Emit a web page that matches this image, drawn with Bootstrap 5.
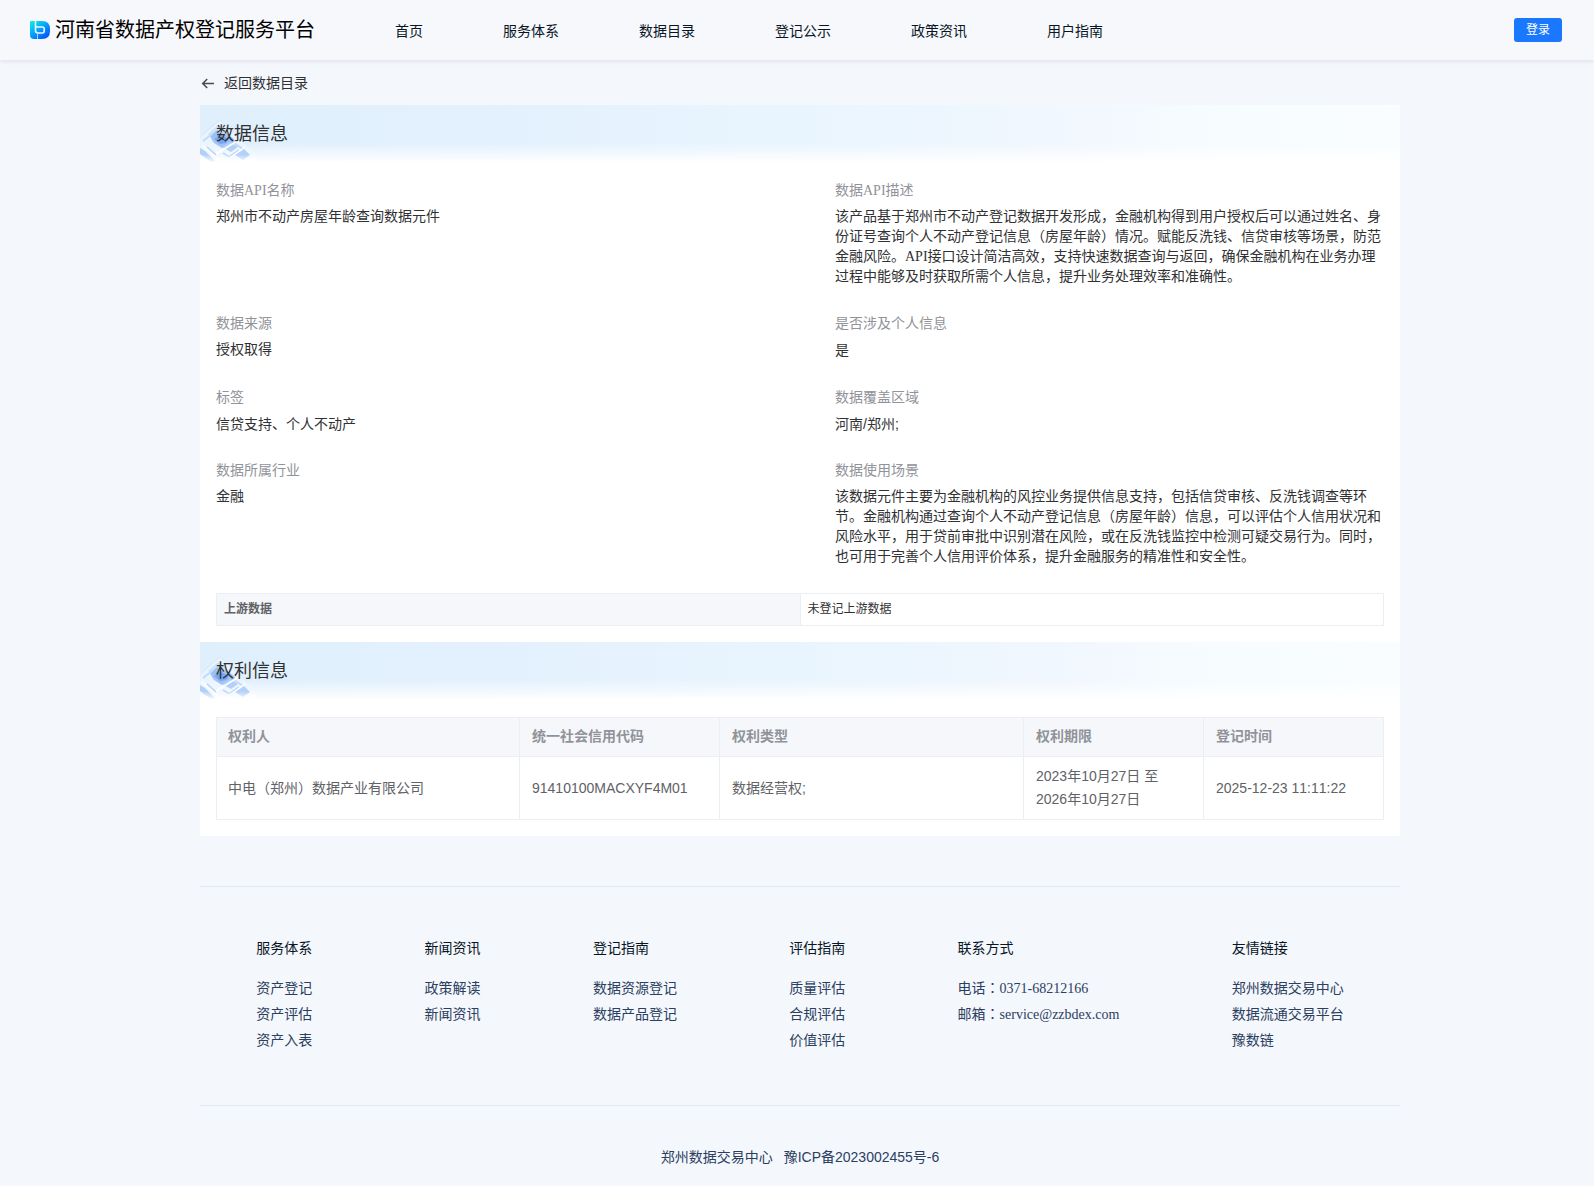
<!DOCTYPE html>
<html lang="zh-CN">
<head>
<meta charset="utf-8">
<title>河南省数据产权登记服务平台</title>
<link href="https://cdn.jsdelivr.net/npm/bootstrap@5.3.0/dist/css/bootstrap.min.css" rel="stylesheet">
<style>
body{font-family:"Liberation Sans","Noto Sans CJK SC",sans-serif;font-size:14px;line-height:20px;background:#f4f7fc;color:#303133}
a{text-decoration:none;color:inherit}
.ff-serif{font-family:"Liberation Serif","Noto Sans CJK SC",serif}
.ff-jp{font-family:"Noto Sans CJK JP",sans-serif;line-height:1}
.topbar{height:60px;background:#f7f8fc;box-shadow:0 2px 4px rgba(0,21,41,.08);padding:0 32px 0 30px}
.brand-name{font-size:20px;line-height:30px;color:#000;margin-left:5px}
.topnav{gap:80px;margin-left:80px;padding-top:2px;color:#071525}
.login{width:48px;height:24px;font-size:12px;line-height:24px;background:#1a78ff;color:#fff;border-radius:3px}
.page{width:1200px;margin-left:200px}
.back{height:45px}
.banner{height:58px;padding:0 16px;font-size:18px;line-height:58px;background:linear-gradient(180deg,rgba(255,255,255,0) 0,rgba(255,255,255,0) 66%,#fff 100%),linear-gradient(90deg,#e0effc 0,#e3f1fe 25%,#e9f5fe 50%,#f1f7fe 72%,#f7fcff 85%,#f9fdff 100%)}
.banner svg{position:absolute;left:0;top:0}
.banner span{position:relative}
.lab{color:#909399;line-height:20px;margin-bottom:6px}
.fields{padding:18px 16px 0}
.fields .c1{width:619px}
.fields .c2{width:549px}
.r1{height:132px}.r2{height:74px}.r3{height:73px}.r4{height:133px}
.lower{padding-top:1px}
.up{margin:0 16px;border:1px solid #ebeef5;height:33px;font-size:12px;line-height:30px}
.up>div{width:583px;padding-left:7px}
.up>div:first-child{width:584px;background:#f5f7fb;color:#606266;font-weight:700;border-right:1px solid #ebeef5}
.rights{margin:17px 16px 0;width:1168px;table-layout:fixed;border-collapse:separate;border-spacing:0;border:solid #ebeef5;border-width:1px 0 0 1px;color:#606266;line-height:23px;font-kerning:none}
.rights th,.rights td{border:solid #ebeef5;border-width:0 1px 1px 0;padding:0 12px 0 11px}
.rights th{height:39px;background:#f5f7fa;color:#909399;padding-bottom:1px}
.rights td{height:63px}
.rights th+th,.rights td+td{padding-left:12px}
.foot{margin-top:50px;border-top:1px solid #dfe7f1;border-bottom:1px solid #dfe7f1;height:220px;padding-top:52px}
.foot h6{font-size:14px;line-height:20px;font-weight:400;color:#071525;margin:0 0 20px}
.foot p{margin:0 0 6px;height:20px;color:#2b405f}
.copy{margin-top:41px;color:#2b405f;gap:11px}
</style>
</head>
<body>
<svg width="0" height="0" class="position-absolute"><defs>
  <filter id="soft" x="-20%" y="-20%" width="140%" height="140%"><feGaussianBlur stdDeviation=".6"/></filter>
  <linearGradient id="fade" x1="0" y1="0" x2="0" y2="1"><stop offset=".85" stop-color="#fff" stop-opacity="0"/><stop offset="1" stop-color="#fff"/></linearGradient>
  <symbol id="cubes" viewBox="0 0 56 58">
    <g filter="url(#soft)">
      <path d="M0 34L20 15L52 46L40 58H16L0 46z" fill="#f0f7ff" opacity=".65"/>
      <path d="M8 29l10-9 9 6-9 9z" fill="#c5ddf9" opacity=".8"/>
      <path d="M10 31l7-6 4 4 5-1 8 6 2 4-7 1-7 4-8-5-2-3z" fill="#8bb6f5" opacity=".8"/>
      <path d="M14 34l7-4 8 4-3 4-6 1z" fill="#5d93f0" opacity=".6"/>
      <path d="M22 42l8-5 8 5-7 5z" fill="#b3d1f8"/>
      <path d="M0 43l5 3 10 10-4 1L0 49z" fill="#b0d0f7"/>
      <path d="M35 50l9-6 6 6-7 5z" fill="#b3d1f9"/>
      <path d="M29 52l10-7M3 36l9-7M7 42l9 8M23 48l8 5M34 38l9 6" stroke="#c0daf8" stroke-width="1.800"/>
      <path d="M2 40l17 15M16 49l21-13M27 55l18-13" stroke="#fff" stroke-width="1.500"/>
    </g>
    <path d="M3 29L20 15L36 29M8 33L20 22" fill="none" stroke="#c9e0f8" stroke-width=".6"/>
    <path d="M0 0h56v58H0z" fill="url(#fade)"/>
  </symbol>
</defs></svg>
<header class="topbar d-flex align-items-center">
  <svg width="20" height="20" viewBox="0 0 20 20"><defs><linearGradient id="lg" x1="0" y1="0" x2=".8" y2="1"><stop offset="0" stop-color="#06f5df"/><stop offset=".45" stop-color="#09aaf8"/><stop offset="1" stop-color="#0550ff"/></linearGradient></defs>
  <path d="M1 1H12Q20 1 20 9V11Q20 19 12 19H4Q0 19 0 15V2Q0 1 1 1z" fill="url(#lg)"/>
  <path d="M5.500 1V10.500Q5.500 13 8 13H12.300Q14.200 13 14.200 11V9Q14.200 7 12.300 7H6" fill="none" stroke="#e9fbff" stroke-width="1.600"/><path d="M7.500 13.500V19" stroke="#9ed8ff" stroke-width="1"/></svg>
  <span class="brand-name">河南省数据产权登记服务平台</span>
  <nav class="topnav d-flex"><a href="#">首页</a><a href="#">服务体系</a><a href="#">数据目录</a><a href="#">登记公示</a><a href="#">政策资讯</a><a href="#">用户指南</a></nav>
  <a class="login text-center ms-auto" href="#">登录</a>
</header>
<main class="page">
  <div class="back d-flex align-items-center"><svg width="24" height="16" viewBox="0 0 24 16" fill="none" stroke="#484b50" stroke-width="1.500"><path d="M14 8.500H2.800M7.200 4L2.700 8.500L7.200 13"/></svg><span>返回数据目录</span></div>
  <section class="bg-white pb-3">
    <div class="banner position-relative"><svg width="56" height="58"><use href="#cubes"/></svg><span>数据信息</span></div>
    <div class="fields">
      <div class="d-flex r1 ff-serif"><div class="c1"><div class="lab">数据API名称</div><div>郑州市不动产房屋年龄查询数据元件</div></div><div class="c2"><div class="lab">数据API描述</div><div>该产品基于郑州市不动产登记数据开发形成，金融机构得到用户授权后可以通过姓名、身份证号查询个人不动产登记信息（房屋年龄）情况。赋能反洗钱、信贷审核等场景，防范金融风险。API接口设计简洁高效，支持快速数据查询与返回，确保金融机构在业务办理过程中能够及时获取所需个人信息，提升业务处理效率和准确性。</div></div></div>
      <div class="d-flex r2"><div class="c1"><div class="lab">数据来源</div><div>授权取得</div></div><div class="c2"><div class="lab">是否涉及个人信息</div><div class="lower">是</div></div></div>
      <div class="d-flex r3"><div class="c1"><div class="lab">标签</div><div class="lower">信贷支持、个人不动产</div></div><div class="c2"><div class="lab">数据覆盖区域</div><div class="lower">河南/郑州;</div></div></div>
      <div class="d-flex r4"><div class="c1"><div class="lab">数据所属行业</div><div>金融</div></div><div class="c2"><div class="lab">数据使用场景</div><div>该数据元件主要为金融机构的风控业务提供信息支持，包括信贷审核、反洗钱调查等环节。金融机构通过查询个人不动产登记信息（房屋年龄）信息，可以评估个人信用状况和风险水平，用于贷前审批中识别潜在风险，或在反洗钱监控中检测可疑交易行为。同时，也可用于完善个人信用评价体系，提升金融服务的精准性和安全性。</div></div></div>
    </div>
    <div class="up d-flex"><div>上游数据</div><div>未登记上游数据</div></div>
    <div class="banner position-relative mt-3"><svg width="56" height="58"><use href="#cubes"/></svg><span>权利信息</span></div>
    <table class="rights"><colgroup><col style="width:303px"><col style="width:200px"><col style="width:304px"><col style="width:180px"><col style="width:180px"></colgroup>
      <tr><th>权利人</th><th>统一社会信用代码</th><th>权利类型</th><th>权利期限</th><th>登记时间</th></tr>
      <tr><td>中电（郑州）数据产业有限公司</td><td>91410100MACXYF4M01</td><td>数据经营权;</td><td>2023年10月27日 至 2026年10月27日</td><td>2025-12-23 11:11:22</td></tr>
    </table>
  </section>
  <footer>
    <div class="foot d-flex justify-content-around ff-serif">
      <div><h6>服务体系</h6><p>资产登记</p><p>资产评估</p><p>资产入表</p></div>
      <div><h6>新闻资讯</h6><p>政策解读</p><p>新闻资讯</p></div>
      <div><h6>登记指南</h6><p>数据资源登记</p><p>数据产品登记</p></div>
      <div><h6>评估指南</h6><p>质量评估</p><p>合规评估</p><p>价值评估</p></div>
      <div><h6>联系方式</h6><p>电话<span class="ff-jp" lang="ja">：</span>0371-68212166</p><p>邮箱<span class="ff-jp" lang="ja">：</span>service@zzbdex.com</p></div>
      <div><h6>友情链接</h6><p>郑州数据交易中心</p><p>数据流通交易平台</p><p>豫数链</p></div>
    </div>
    <div class="copy d-flex justify-content-center"><span>郑州数据交易中心</span><span>豫ICP备2023002455号-6</span></div>
  </footer>
</main>
<script src="https://cdn.jsdelivr.net/npm/bootstrap@5.3.0/dist/js/bootstrap.bundle.min.js"></script>
</body>
</html>
